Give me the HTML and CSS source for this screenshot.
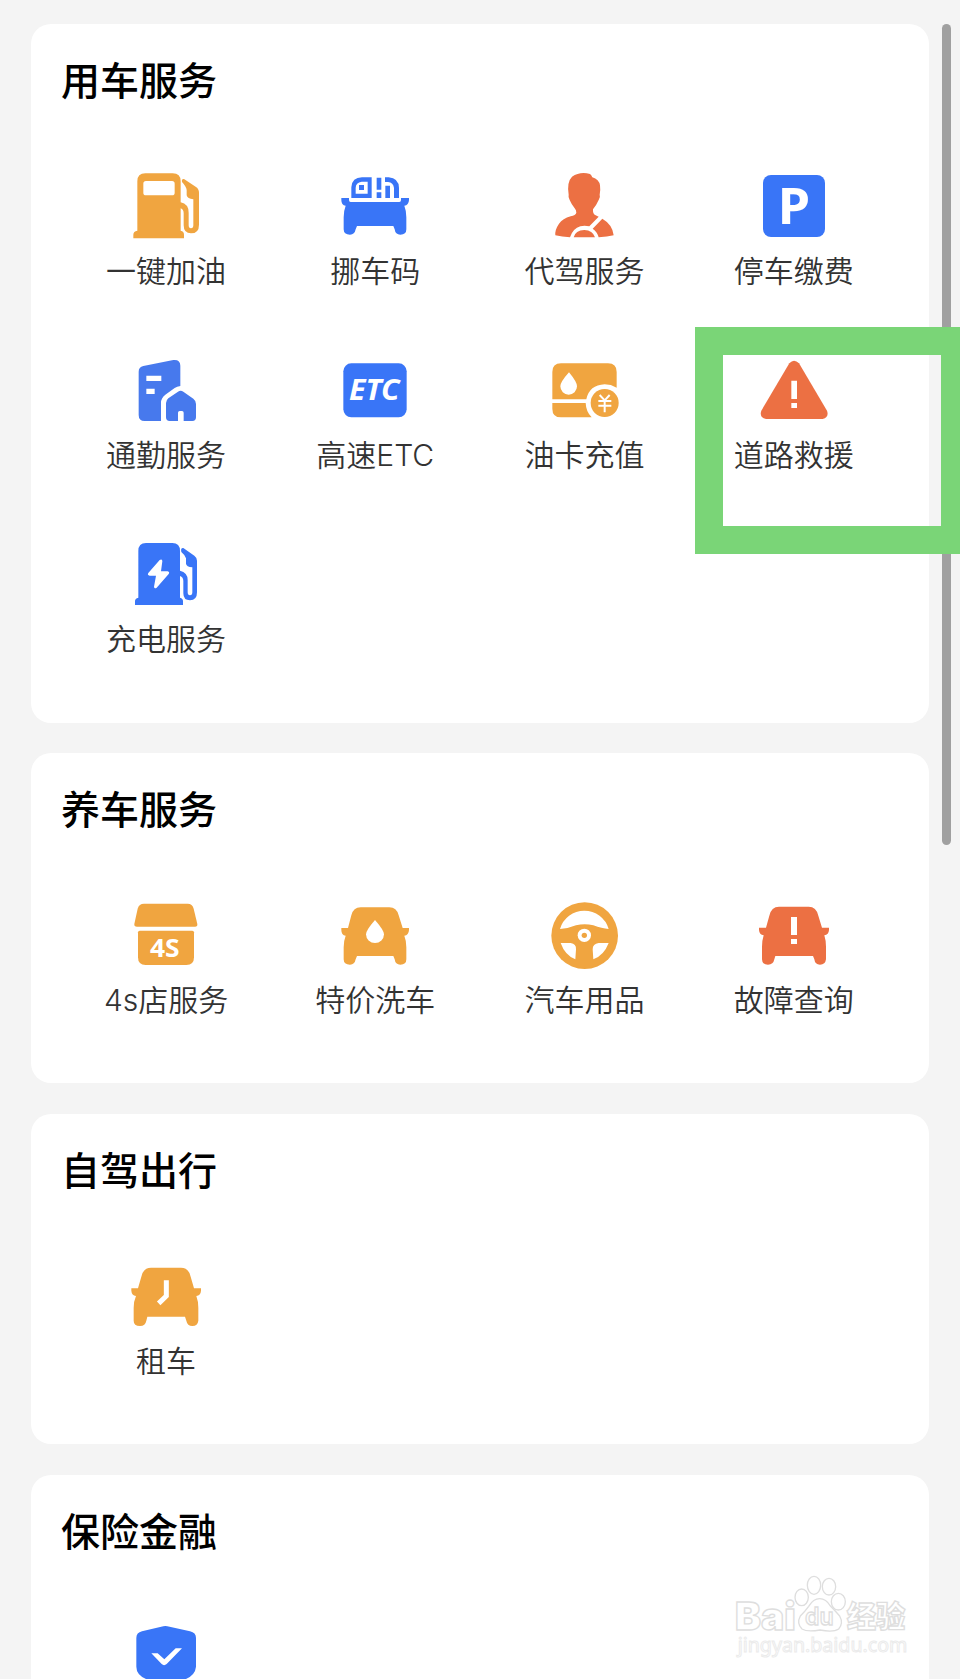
FILE: index.html
```html
<!DOCTYPE html>
<html lang="zh-CN">
<head>
    <meta charset="UTF-8">
    <meta name="viewport" content="width=device-width, initial-scale=1.0">
    <title>车主服务</title>
    <link rel="stylesheet" href="styles.css">
</head>
<body>
    <div class="container">
        <div class="card">
            <h2>用车服务</h2>
            <div class="service-list">
                <div class="service">
                    <svg class="icon orange" viewBox="18 18 240 240">
                        <path fill-rule="evenodd" d="M52 64Q52 40 76 40H158Q182 40 182 64V127Q206 132 206 158V196Q206 205 213 205Q220 205 220 196V118Q202 116 200 106V90Q199 80 186 66Q184 56 192 57L228 81Q237 87 237 98V194Q237 220 213 220Q191 220 191 196V160Q191 148 182 145V212Q192 214 192 224V235H40V224Q40 214 52 212ZM78 63Q70 63 70 71V98Q70 106 78 106H156Q164 106 164 98V71Q164 63 156 63Z"/>
                    </svg>
                    <span class="label">一键加油</span>
                </div>
                <div class="service">
                    <svg class="icon blue" viewBox="645 18 240 240">
                        <path fill-rule="evenodd" d="M694 114V82Q696 52 726 52H755V114ZM707 101H743V65H725Q707 67 707 84ZM717 75H732V90H717Z"/>
                        <path d="M770 53H784V89H770ZM770 97H784V114H770ZM796 77H810V114H796ZM795 52H806Q836 54 837 84V114H822V84Q820 67 804 66H795Z"/>
                        <path d="M664 114H687V120Q687 126 692 126H838Q843 126 843 120V114H867V120Q866 136 853 137Q859 152 859 172V208Q859 224 841 224Q826 224 824 208L820 198H711L707 208Q704 224 690 224Q671 224 671 208V172Q671 152 677 137Q664 136 664 120Z"/>
                    </svg>
                    <span class="label">挪车码</span>
                </div>
                <div class="service">
                    <svg class="icon red" viewBox="12 18 240 240">
                        <path d="M109 158Q109 150 104 145Q94 132 89 120Q84 111 86 104Q80 66 96 50Q120 34 150 42Q154 44 157 52Q177 58 180 76Q182 90 179 104Q182 112 176 120Q170 134 159 148Q158 160 164 164L176 170L148 199Q133 196 121 199Q99 205 90 232Q66 231 46 226Q44 210 57 191Q68 176 92 169Q107 166 109 158Z"/>
                        <path d="M187 176Q218 194 221 226Q202 231 176 232Q172 216 158 206ZM101 232Q106 211 133 210Q158 211 165 232Z"/>
                    </svg>
                    <span class="label">代驾服务</span>
                </div>
                <div class="service">
                    <svg class="icon blue" viewBox="639 18 240 240">
                        <rect x="669" y="45" width="186" height="186" rx="24"/>
                        <text class="icon-text" x="713" y="192" font-size="150" textLength="97" lengthAdjust="spacingAndGlyphs">P</text>
                    </svg>
                    <span class="label">停车缴费</span>
                </div>
                <div class="service">
                    <svg class="icon navy" viewBox="18 15 240 240">
                        <path fill-rule="evenodd" d="M56 80Q56 66 70 63L160 45Q181 43 181 62V123Q171 124 164 129L136 149Q123 159 123 173V228H74Q56 228 56 210ZM79 92V108H124V92ZM79 131V147H104V131Z"/>
                        <path d="M138 174Q138 166 145 160L174 140Q182 135 190 140L220 161Q228 167 228 177V217Q228 228 217 228H191V203Q191 198 186 198H179Q174 198 174 203V228H149Q138 228 138 217Z"/>
                    </svg>
                    <span class="label">通勤服务</span>
                </div>
                <div class="service">
                    <svg class="icon blue" viewBox="645 15 240 240">
                        <rect x="670" y="55" width="190" height="162" rx="24"/>
                        <text class="icon-text slanted" x="687" y="166" font-size="84" textLength="152" lengthAdjust="spacingAndGlyphs">ETC</text>
                    </svg>
                    <span class="label">高速ETC</span>
                </div>
                <div class="service">
                    <svg class="icon orange" viewBox="12 15 240 240">
                        <path fill-rule="evenodd" d="M37 81Q37 55 63 55H204Q230 55 230 81V128Q213 118 194 118Q148 120 139 163H37ZM87 82Q61 111 61 124A25 25 0 0 0 111 124Q111 111 87 82Z"/>
                        <path d="M37 174H137Q138 200 155 217H63Q37 217 37 191Z"/>
                        <circle cx="194" cy="174" r="42"/>
                        <path class="line thin" d="M179 150L194 166L209 150M194 166V202M175 168H214M175 182H214"/>
                    </svg>
                    <span class="label">油卡充值</span>
                </div>
                <div class="service">
                    <svg class="icon red" viewBox="639 15 240 240">
                        <path d="M748 55Q762 40 777 55L861 197Q868 216 848 222H678Q657 217 664 197Z"/>
                        <path class="white" d="M754 107H771V162H754ZM754 174H771V189H754Z"/>
                    </svg>
                    <span class="label">道路救援</span>
                </div>
                <div class="service">
                    <svg class="icon blue" viewBox="18 12 240 240">
                        <path d="M55 63Q55 39 78 39H157Q180 39 180 63V122Q203 127 203 150V187Q203 196 210 196Q217 196 217 187V112Q199 110 198 101V85Q196 76 184 66Q181 53 190 54L223 77Q231 83 231 92V187Q231 211 210 211Q190 211 190 190V153Q190 141 180 138V203Q189 205 189 213V225H45V213Q45 205 55 203Z"/>
                        <path class="white" d="M119 90Q127 86 127 94L123 124H143Q150 126 146 132L110 173Q103 178 102 170L108 137H89Q81 135 85 129Z"/>
                    </svg>
                    <span class="label">充电服务</span>
                </div>
            </div>
        </div>

        <div class="card">
            <h2>养车服务</h2>
            <div class="service-list">
                <div class="service">
                    <svg class="icon orange" viewBox="18 15 240 240">
                        <path d="M53 56Q57 41 72 41H203Q217 41 221 56L232 102Q233 110 225 110H51Q42 110 43 102Z"/>
                        <path d="M59 122H217Q222 122 222 127V202Q222 225 199 225H77Q54 225 54 202V127Q54 122 59 122Z"/>
                        <text class="icon-text" x="90" y="201" font-size="75" textLength="89" lengthAdjust="spacingAndGlyphs">4S</text>
                    </svg>
                    <span class="label">4s店服务</span>
                </div>
                <div class="service">
                    <svg class="icon orange" viewBox="645 15 240 240">
                        <path d="M694 76Q700 52 722 52H808Q830 52 836 76L848 114H867V120Q866 136 853 137Q859 152 859 172V208Q859 224 841 224Q826 224 824 208L820 198H711L707 208Q704 224 690 224Q671 224 671 208V172Q671 152 677 137Q664 136 664 120V114H684Z"/>
                        <path class="white" d="M765 90Q738 121 738 133A27 26 0 0 0 792 133Q792 121 765 90Z"/>
                    </svg>
                    <span class="label">特价洗车</span>
                </div>
                <div class="service">
                    <svg class="icon orange" viewBox="12 15 240 240">
                        <circle cx="134" cy="137" r="100"/>
                        <path class="white" d="M60 117A76 76 0 0 1 206 117Q186 116 160 106Q134 99 108 106Q84 116 60 117ZM62 159H92Q109 161 108 178L106 208Q75 196 62 159ZM206 159H176Q158 161 158 178L160 208Q192 196 206 159Z"/>
                        <circle class="white" cx="133" cy="136" r="20"/>
                        <circle cx="133" cy="136" r="8"/>
                    </svg>
                    <span class="label">汽车用品</span>
                </div>
                <div class="service">
                    <svg class="icon red" viewBox="639 15 240 240">
                        <path d="M688 77Q694 50 717 50H806Q829 50 835 77L846 113H867V120Q866 134 853 136Q858 152 858 170V208Q856 224 840 224Q825 224 823 208L819 198H706L703 208Q700 224 684 224Q666 224 666 208V170Q666 152 671 136Q658 134 657 120V113H678Z"/>
                        <path class="white" d="M753 81H771V135H753ZM753 147H771V162H753Z"/>
                    </svg>
                    <span class="label">故障查询</span>
                </div>
            </div>
        </div>

        <div class="card">
            <h2>自驾出行</h2>
            <div class="service-list">
                <div class="service">
                    <svg class="icon orange" viewBox="18 3 240 240">
                        <path d="M64 65Q70 38 93 38H183Q206 38 212 65L222 100H243V107Q242 121 229 123Q235 139 235 158V197Q233 213 217 213Q202 213 199 197L195 185H82L79 197Q76 213 60 213Q41 213 41 197V158Q41 139 48 123Q35 121 34 107V100H54Z"/>
                        <path class="line" d="M139 76V123L116 145"/>
                    </svg>
                    <span class="label">租车</span>
                </div>
            </div>
        </div>

        <div class="card">
            <h2>保险金融</h2>
            <div class="service-list">
                <div class="service">
                    <svg class="icon blue" viewBox="18 21 240 240">
                        <path d="M130 49Q136 47 142 49L210 64Q228 68 228 84V170Q226 194 198 207L138 234L78 207Q49 194 49 170V84Q49 68 66 64Z"/>
                        <path class="white" d="M94 130H113L133 148L167 115H186L140 162Q132 169 125 162Z"/>
                    </svg>
                </div>
            </div>
        </div>
    </div>

    <div class="scrollbar"></div>
    <div class="highlight"></div>

    <svg class="watermark" viewBox="0 0 720 357">
        <text class="brand" x="45" y="209" font-size="116" textLength="182" lengthAdjust="spacingAndGlyphs">Bai</text>
        <ellipse cx="245" cy="112" rx="20" ry="25"/>
        <ellipse cx="282" cy="76" rx="20" ry="27"/>
        <ellipse cx="327" cy="80" rx="20" ry="25"/>
        <ellipse cx="355" cy="125" rx="21" ry="25"/>
        <path d="M299 116Q318 116 332 139Q345 152 359 168Q371 190 356 207Q340 218 300 210Q262 217 246 207Q229 190 241 168Q255 154 266 139Q280 116 299 116Z"/>
        <text class="brand du" x="255" y="196" font-size="72" textLength="86" lengthAdjust="spacingAndGlyphs">du</text>
        <text class="brand" x="380" y="202" font-size="88" textLength="176" lengthAdjust="spacingAndGlyphs">经验</text>
        <text class="url" x="53" y="277" font-size="58" textLength="509" lengthAdjust="spacingAndGlyphs">jingyan.baidu.com</text>
    </svg>
</body>
</html>
```

FILE: styles.css
```css
* {
    box-sizing: border-box;
}

body {
    position: relative;
    font-family: Inter, 'Noto Sans CJK SC', sans-serif;
    background: #f4f4f4;
    color: #333;
    margin: 0;
    height: 1679px;
    overflow: hidden;
}

.container {
    display: flex;
    flex-direction: column;
    gap: 30.4px;
    height: 1679px;
    padding: 24px 31px 0;
    overflow: hidden;
}

.card {
    flex-shrink: 0;
    background: #fff;
    border-radius: 20px;
    padding: 27px 30px 4.5px;
}

h2 {
    margin: 0;
    font-family: 'Noto Sans CJK SC', sans-serif;
    font-size: 39px;
    line-height: 54px;
    font-weight: 500;
    color: #000;
}

.service-list {
    display: grid;
    grid-template-columns: repeat(4, 209.2px);
    grid-auto-rows: 184px;
    padding-top: 61px;
}

.service {
    display: flex;
    flex-direction: column;
    align-items: center;
}

.icon {
    width: 80px;
    height: 80px;
}

.orange {
    fill: #f0a540;
}

.blue {
    fill: #3975f7;
}

.navy {
    fill: #4779ed;
}

.red {
    fill: #ec7043;
}

.white {
    fill: #fff;
}

.line {
    fill: none;
    stroke: #fff;
    stroke-width: 15;
}

.thin {
    stroke-width: 6;
}

.icon-text {
    font-family: 'Noto Sans', sans-serif;
    font-weight: bold;
    fill: #fff;
}

.slanted {
    font-style: italic;
}

.label {
    padding-left: 1px;
    font-size: 30px;
    line-height: 51px;
    font-weight: 350;
    white-space: nowrap;
}

.scrollbar {
    position: absolute;
    top: 24px;
    left: 942px;
    width: 9px;
    height: 821px;
    border-radius: 5px;
    background: #a0a0a0;
}

/* green frame over the rescue entry */
.highlight {
    position: absolute;
    top: 326.5px;
    left: 695px;
    width: 274px;
    height: 227px;
    border: 28px solid #7ad577;
}

.watermark {
    position: absolute;
    top: 1560px;
    left: 720px;
    width: 240px;
    height: 119px;
    fill: #fff;
    stroke: #dedede;
    stroke-width: 4;
}

.brand {
    font-family: Inter, 'Noto Sans CJK SC', sans-serif;
    font-weight: 900;
}

.du {
    font-weight: 600;
}

.url {
    font-family: 'Noto Sans', sans-serif;
    stroke: #ebebeb;
    stroke-width: 3;
}
```
